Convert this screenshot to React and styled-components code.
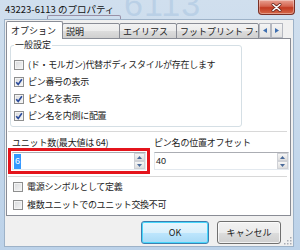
import React from "react";
import styled, { createGlobalStyle } from "styled-components";

const GlobalStyle = createGlobalStyle`
  * { box-sizing: border-box; }
  body {
    margin: 0;
    background: #c3d6ea;
    font-family: "Noto Sans CJK JP", "Liberation Sans", sans-serif;
    color: #1a1a1a;
  }
`;

const generalOptions = [
  { label: "(ド・モルガン)代替ボディスタイルが存在します", checked: false },
  { label: "ピン番号の表示", checked: true },
  { label: "ピン名を表示", checked: true },
  { label: "ピン名を内側に配置", checked: true },
];

const unitOptions = [
  { label: "電源シンボルとして定義", checked: false },
  { label: "複数ユニットでのユニット交換不可", checked: false },
];

const tabs = [
  { label: "オプション", width: 57, active: true },
  { label: "説明", width: 58 },
  { label: "エイリアス", width: 58 },
  { label: "フットプリント フ·", width: 83 },
];

const CheckBox = ({ checked }) => (
  <Box>
    {checked && (
      <svg width="8" height="8" viewBox="0 0 8 8">
        <path d="M1.2 4.2 L3.2 6.4 L6.9 1.2" fill="none" stroke="#2a4b9b" strokeWidth="1.6" />
      </svg>
    )}
  </Box>
);

const SpinArrows = () => (
  <Spinner>
    <SpinHalf>
      <svg width="5" height="3" viewBox="0 0 5 3"><polygon points="0,3 2.5,0 5,3" fill="#4a6a9a" /></svg>
    </SpinHalf>
    <SpinHalf>
      <svg width="5" height="3" viewBox="0 0 5 3"><polygon points="0,0 2.5,3 5,0" fill="#4a6a9a" /></svg>
    </SpinHalf>
  </Spinner>
);

export default function App() {
  return (
    <>
      <GlobalStyle />
      <Window>
        <TitleBar>
          <GhostText>6113</GhostText>
          <GhostFrame />
          <Title>43223-6113 のプロパティ</Title>
          <CloseButton>
            <svg width="11" height="9" viewBox="0 0 11 9">
              <path d="M2 1.5 L9 7.5 M9 1.5 L2 7.5" stroke="#6b2a20" strokeWidth="3" strokeLinecap="round" />
              <path d="M2 1.5 L9 7.5 M9 1.5 L2 7.5" stroke="#ffffff" strokeWidth="1.6" strokeLinecap="round" />
            </svg>
          </CloseButton>
        </TitleBar>

        <Body>
          <TabStrip>
            {tabs.map((t) => (
              <Tab key={t.label} $active={t.active} $width={t.width}>
                {t.label}
              </Tab>
            ))}
            <TabScroll>
              <svg width="4" height="5" viewBox="0 0 4 5"><polygon points="4,0 0,2.5 4,5" fill="#3f6fb0" /></svg>
            </TabScroll>
            <TabScroll>
              <svg width="4" height="5" viewBox="0 0 4 5"><polygon points="0,0 4,2.5 0,5" fill="#3f6fb0" /></svg>
            </TabScroll>
          </TabStrip>

          <Panel>
            <Group>
              <Legend>一般設定</Legend>
              {generalOptions.map((o) => (
                <CheckRow key={o.label}>
                  <CheckBox checked={o.checked} />
                  <CheckLabel>{o.label}</CheckLabel>
                </CheckRow>
              ))}
            </Group>

            <Separator $top={4} />

            <Fields>
              <Field>
                <FieldLabel>ユニット数(最大値は 64)</FieldLabel>
                <SpinBox $highlight>
                  <SpinText>
                    <Selected>6</Selected>
                  </SpinText>
                  <SpinArrows />
                </SpinBox>
              </Field>
              <Field>
                <FieldLabel>ピン名の位置オフセット</FieldLabel>
                <SpinBox>
                  <SpinText>40</SpinText>
                  <SpinArrows />
                </SpinBox>
              </Field>
            </Fields>

            <Separator $top={6} />

            <BottomChecks>
              {unitOptions.map((o) => (
                <CheckRow key={o.label} $height={18}>
                  <CheckBox checked={o.checked} />
                  <CheckLabel>{o.label}</CheckLabel>
                </CheckRow>
              ))}
            </BottomChecks>
          </Panel>

          <ButtonRow>
            <Button $default $width={68}>OK</Button>
            <Button $width={64}>キャンセル</Button>
          </ButtonRow>

          <Grip>
            <svg width="8" height="8" viewBox="0 0 8 8">
              {[[6, 0], [6, 3], [3, 3], [6, 6], [3, 6], [0, 6]].map(([x, y]) => (
                <rect key={`${x}-${y}`} x={x} y={y} width="1.5" height="1.5" fill="#a8acb4" />
              ))}
            </svg>
          </Grip>
        </Body>
      </Window>
    </>
  );
}

const Window = styled.div`
  display: flex;
  flex-direction: column;

  width: 300px;
  height: 250px;

  background: linear-gradient(180deg, #d0dfee 0%, #bcd2e9 100%);
  overflow: hidden;
`;

const TitleBar = styled.div`
  position: relative;
  display: flex;
  align-items: flex-start;

  height: 19px;
  padding: 0 5px;
  overflow: hidden;
`;

const GhostText = styled.span`
  position: absolute;
  left: 124px;
  top: -13px;

  font-family: "Liberation Sans", sans-serif;
  font-size: 34px;
  line-height: 34px;
  color: rgba(168, 196, 224, 0.55);
  letter-spacing: 1px;
`;

const GhostFrame = styled.span`
  position: absolute;
  left: 47px;
  top: 15px;

  width: 74px;
  height: 10px;

  border: 1px solid rgba(110, 80, 110, 0.55);
  border-bottom: none;
  border-radius: 2px 2px 0 0;
`;

const Title = styled.span`
  position: relative;
  margin-top: 3px;

  font-size: 9.5px;
  line-height: 13px;
  color: #111;
`;

const CloseButton = styled.div`
  position: relative;
  display: flex;
  align-items: center;
  justify-content: center;

  width: 37px;
  height: 15px;
  margin-left: auto;

  background: linear-gradient(180deg, #e9a192 0%, #d4644f 45%, #c23a22 55%, #d66a4a 100%);
  border: 1px solid #7a3026;
  border-top: none;
  border-radius: 0 0 4px 4px;
  box-shadow: inset 0 0 0 1px rgba(255, 255, 255, 0.35);
`;

const Body = styled.div`
  position: relative;
  display: flex;
  flex-direction: column;

  flex: 1;
  margin: 0 6px 3px 4px;
  padding: 1px 2px 0 1px;

  background: #f0f0f0;
  border: 1px solid #9db2c8;
`;

const TabStrip = styled.div`
  position: relative;
  z-index: 1;
  display: flex;
  align-items: flex-end;

  height: 18px;
  margin-bottom: -1px;
  padding-left: 1px;
`;

const Tab = styled.div`
  display: flex;
  align-items: center;

  width: ${(p) => p.$width}px;
  height: ${(p) => (p.$active ? 18 : 16)}px;
  padding: 0 0 0 ${(p) => (p.$active ? 4 : 3)}px;
  margin-left: -1px;

  font-size: 9px;
  white-space: nowrap;
  overflow: hidden;

  background: ${(p) =>
    p.$active ? "#ffffff" : "linear-gradient(180deg, #f2f2f2 0%, #ebebeb 50%, #dddddd 51%, #cfcfcf 100%)"};
  border: 1px solid #898c95;
  border-bottom: ${(p) => (p.$active ? "none" : "1px solid #898c95")};
  border-radius: 2px 2px 0 0;
  z-index: ${(p) => (p.$active ? 2 : 1)};
`;

const TabScroll = styled.div`
  display: flex;
  align-items: center;
  justify-content: center;

  width: 12px;
  height: 15px;
  margin-bottom: 1px;

  background: linear-gradient(180deg, #f4f4f4 0%, #e2e2e2 100%);
  border: 1px solid #b5b8c0;
`;

const Panel = styled.div`
  display: flex;
  flex-direction: column;

  padding: 0 3px 1px 1px;

  background: #ffffff;
  border: 1px solid #898c95;
`;

const Group = styled.fieldset`
  width: 232px;
  height: 88px;
  margin: 0 0 0 2px;
  padding: 5px 0 0 3px;

  border: 1px solid #d5dfe5;
  border-radius: 3px;
`;

const Legend = styled.legend`
  padding: 0 1px;

  font-size: 9px;
  line-height: 12px;
`;

const CheckRow = styled.div`
  display: flex;
  align-items: center;
  gap: 4px;

  height: ${(p) => p.$height || 17}px;
`;

const Box = styled.span`
  display: flex;
  align-items: center;
  justify-content: center;
  flex-shrink: 0;

  width: 10px;
  height: 10px;

  background: linear-gradient(135deg, #d8dadc 0%, #f6f6f6 100%);
  border: 1px solid #8e8f8f;
  box-shadow: inset 0 0 0 1px #f4f4f4;
`;

const CheckLabel = styled.span`
  font-size: 9px;
  line-height: 12px;
  letter-spacing: -0.3px;
  white-space: nowrap;
`;

const Separator = styled.div`
  height: 1px;
  margin: ${(p) => p.$top}px 0 0 0;

  background: #d8d8d8;
`;

const Fields = styled.div`
  display: grid;
  grid-template-columns: 134px 135px;
  column-gap: 8px;

  padding: 5px 0 0 4px;
`;

const Field = styled.div`
  display: flex;
  flex-direction: column;
  gap: 3px;
`;

const FieldLabel = styled.span`
  font-size: 9px;
  line-height: 12px;
  letter-spacing: -0.2px;
  white-space: nowrap;
`;

const SpinBox = styled.div`
  display: flex;
  align-items: stretch;

  height: 18px;

  background: #ffffff;
  border: 1px solid #e3e9ef;
  border-top-color: #abadb3;
  outline: ${(p) => (p.$highlight ? "3px solid #e4141c" : "none")};
  outline-offset: 1px;
`;

const SpinText = styled.div`
  display: flex;
  align-items: center;

  flex: 1;
  padding-left: 1px;

  font-family: "Liberation Sans", sans-serif;
  font-size: 9px;
`;

const Selected = styled.span`
  padding: 1px 1px;

  background: #3399ff;
  color: #ffffff;
  line-height: 13px;
`;

const Spinner = styled.div`
  display: flex;
  flex-direction: column;

  width: 11px;
`;

const SpinHalf = styled.div`
  display: flex;
  align-items: center;
  justify-content: center;

  flex: 1;

  background: linear-gradient(180deg, #f6f6f6 0%, #dedede 100%);
  border: 1px solid #cfd1d6;
`;

const BottomChecks = styled.div`
  display: flex;
  flex-direction: column;

  padding: 1px 0 0 5px;
`;

const ButtonRow = styled.div`
  display: flex;
  justify-content: flex-end;
  gap: 8px;

  padding: 5px 10px 0 0;
`;

const Button = styled.div`
  display: flex;
  align-items: center;
  justify-content: center;

  width: ${(p) => p.$width}px;
  height: 23px;

  font-size: 9px;

  background: ${(p) =>
    p.$default
      ? "linear-gradient(180deg, #eaf6fd 0%, #d9f0fc 50%, #bee6fd 51%, #a7d9f5 100%)"
      : "linear-gradient(180deg, #f2f2f2 0%, #ebebeb 50%, #dddddd 51%, #cfcfcf 100%)"};
  border: 1px solid ${(p) => (p.$default ? "#3c7fb1" : "#707070")};
  border-radius: 3px;
  box-shadow: inset 0 0 0 1px ${(p) => (p.$default ? "#48d7fb" : "rgba(255,255,255,0.7)")};
`;

const Grip = styled.span`
  position: absolute;
  right: 1px;
  bottom: 1px;

  display: flex;
`;
